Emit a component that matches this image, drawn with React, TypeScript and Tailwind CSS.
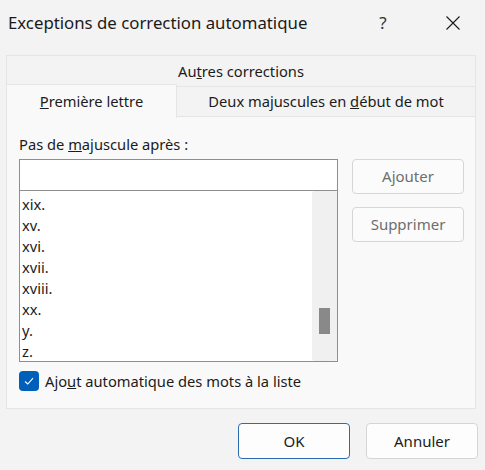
const ITEMS = ['xix.', 'xv.', 'xvi.', 'xvii.', 'xviii.', 'xx.', 'y.', 'z.']

function DialogButton({
  children,
  primary,
  disabled,
}: {
  children: React.ReactNode
  primary?: boolean
  disabled?: boolean
}) {
  return (
    <button
      type="button"
      className={`flex h-full w-full items-center justify-center rounded-[4px] border text-[15px] ${
        primary
          ? 'border-[#2a6cb0] bg-[#fdfdfd] text-[#1b1b1b]'
          : disabled
            ? 'border-[#d6d6d6] bg-[#fbfbfb] text-[#6e6e6e]'
            : 'border-[#d5d5d5] bg-[#fdfdfd] text-[#1b1b1b]'
      }`}
    >
      {children}
    </button>
  )
}

export default function App() {
  return (
    <div
      className="flex h-[470px] w-[485px] flex-col bg-[#f3f3f3] text-[14.7px] text-[#1b1b1b]"
      style={{ fontFamily: '"Segoe UI", "Noto Sans", sans-serif' }}
    >
      {/* title bar */}
      <div className="flex h-[46px] items-center pl-2">
        <span className="flex-1 text-[16.8px] text-[#1a1a1a]">Exceptions de correction automatique</span>
        <span className="w-[20px] text-center text-[17px] text-[#333]">?</span>
        <span className="ml-[50px] mr-[22px] flex w-[20px] justify-center">
          <svg width="16" height="16" viewBox="0 0 16 16" fill="none" stroke="#1a1a1a" strokeWidth="1.1">
            <path d="M1.5 1.5 L14.5 14.5 M14.5 1.5 L1.5 14.5" />
          </svg>
        </span>
      </div>

      {/* tabs */}
      <div className="ml-[6px] mr-[9px] mt-[9px] flex flex-col">
        <div className="flex h-[31px] items-center justify-center border border-b-0 border-[#e5e5e5] bg-[#f3f3f3]">
          Au<u>t</u>res corrections
        </div>
        <div className="flex h-[31px] items-stretch">
          <div className="z-10 -mt-[2px] flex h-[34px] w-[171px] items-center justify-center border border-b-0 border-[#e5e5e5] bg-[#f9f9f9]">
            <span><u>P</u>remière lettre</span>
          </div>
          <div className="flex flex-1 items-center justify-center border border-l-0 border-[#e5e5e5] bg-[#f3f3f3]">
            <span>
              Deux majuscules en <u>d</u>ébut de mot
            </span>
          </div>
        </div>

        {/* panel */}
        <div className="h-[292px] border border-t-0 border-[#e5e5e5] bg-[#f9f9f9] pl-[12px] pr-[11px] pt-[16px]">
          <div className="h-[26px]">
            Pas de <u>m</u>ajuscule après :
          </div>
          <div className="flex">
            <div className="flex w-[319px] flex-col">
              <div className="h-[32px] border border-[#8e8e8e] bg-white" />
              <div className="flex h-[171px] border border-t-0 border-[#8e8e8e] bg-white">
                <div className="flex flex-1 flex-col overflow-hidden pl-[2px] pt-[3px]">
                  {ITEMS.map((item) => (
                    <div key={item} className="flex h-[21px] shrink-0 items-center leading-none">
                      {item}
                    </div>
                  ))}
                </div>
                <div className="flex w-[25px] flex-col rounded-[3px] bg-[#f0f0f0]">
                  <div className="ml-[7px] mt-[117px] h-[26px] w-[11px] bg-[#898989]" />
                </div>
              </div>
            </div>
            <div className="ml-[14px] flex w-[112px] flex-col gap-[13px]">
              <div className="h-[35px]">
                <DialogButton disabled>Ajouter</DialogButton>
              </div>
              <div className="h-[35px]">
                <DialogButton disabled>Supprimer</DialogButton>
              </div>
            </div>
          </div>
          <div className="mt-[8px] flex items-center gap-[6px]">
            <div className="flex h-[20px] w-[20px] items-center justify-center rounded-[4px] bg-[#005fb8]">
              <svg width="12" height="12" viewBox="0 0 12 12" fill="none" stroke="white" strokeWidth="1.1">
                <path d="M2 6.5 L4.8 9 L10 3.2" />
              </svg>
            </div>
            <span>
              Ajo<u>u</u>t automatique des mots à la liste
            </span>
          </div>
        </div>
      </div>

      {/* footer */}
      <div className="mt-[14px] flex justify-end gap-[16px] pr-[7px]">
        <div className="h-[36px] w-[112px]">
          <DialogButton primary>OK</DialogButton>
        </div>
        <div className="h-[36px] w-[112px]">
          <DialogButton>Annuler</DialogButton>
        </div>
      </div>
    </div>
  )
}
